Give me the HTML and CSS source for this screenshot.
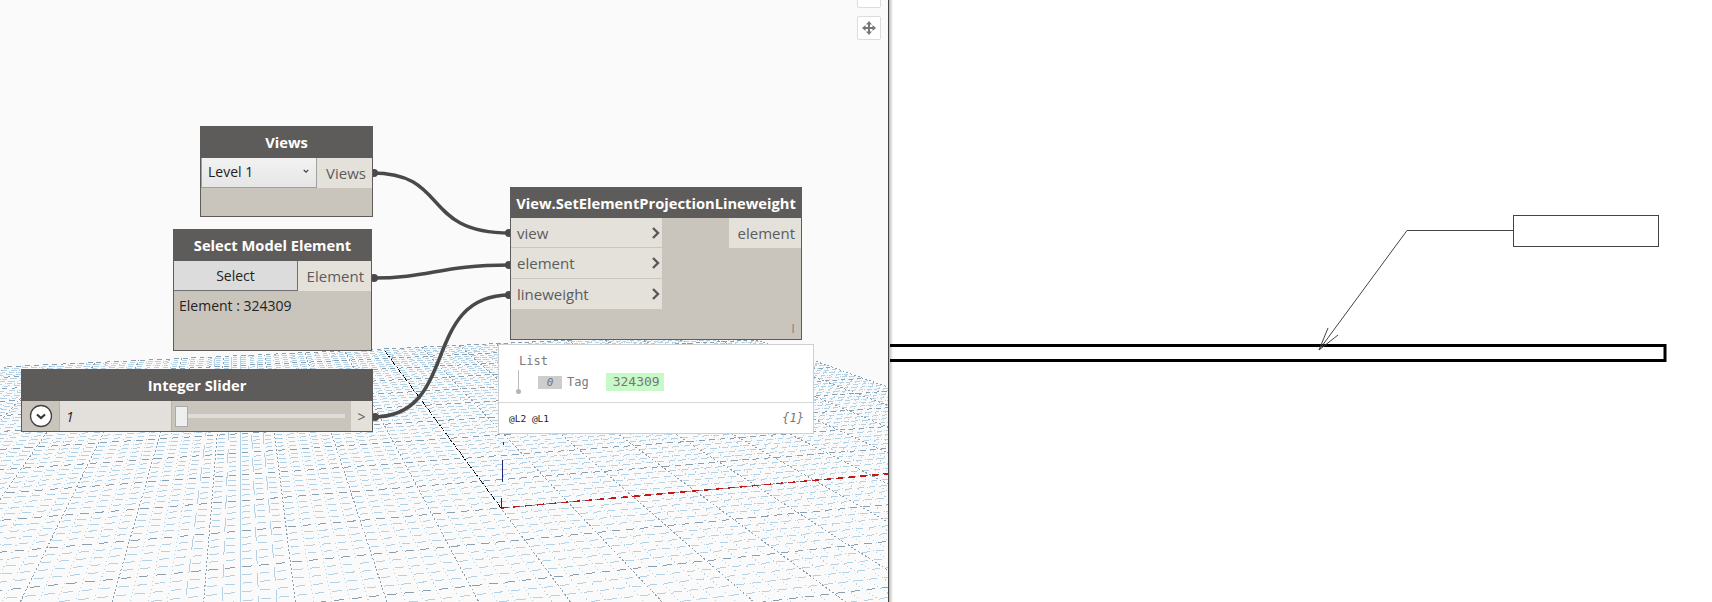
FILE: index.html
```html
<!DOCTYPE html>
<html lang="en">
<head>
    <meta charset="UTF-8">
    <title>Dynamo - Set Element Projection Lineweight</title>
    <link rel="stylesheet" href="styles.css">
</head>
<body>

    <div class="workspace">
        <svg id="grid" class="layer" width="889" height="602"></svg>

        <svg class="layer" width="889" height="602">
            <path class="wire" d="M372 173 C 450 173, 420 233, 510 233"/>
            <path class="wire" d="M372 278 C 430 278, 440 265, 510 265"/>
            <path class="wire" d="M373 417 C 460 417, 420 295, 510 295"/>
            <circle class="nub" cx="374" cy="173" r="4"/>
            <circle class="nub" cx="374" cy="278" r="4"/>
            <circle class="nub" cx="375" cy="417" r="4"/>
            <circle class="nub" cx="509" cy="233" r="4"/>
            <circle class="nub" cx="509" cy="265" r="4"/>
            <circle class="nub" cx="509" cy="295" r="4"/>
        </svg>

        <div class="node node-views">
            <div class="node-title">Views</div>
            <div class="node-row">
                <div class="combo">
                    <span>Level 1</span>
                    <svg width="6" height="5" viewBox="0 0 8 6"><path class="combo-arrow" d="M1 1 L4 4 L7 1"/></svg>
                </div>
                <div class="port port-out">Views</div>
            </div>
        </div>

        <div class="node node-select">
            <div class="node-title">Select Model Element</div>
            <div class="node-row">
                <div class="select-btn">Select</div>
                <div class="port port-out">Element</div>
            </div>
            <div class="node-info">Element : 324309</div>
        </div>

        <div class="node node-slider">
            <div class="node-title">Integer Slider</div>
            <div class="node-row slider-row">
                <div class="expander">
                    <svg width="24" height="24" viewBox="0 0 24 24">
                        <circle cx="12" cy="12" r="10.5" class="expander-ring"/>
                        <path class="expander-arrow" d="M8 10.5 L12 14 L16 10.5"/>
                    </svg>
                </div>
                <div class="slider-value">1</div>
                <div class="slider-track">
                    <div class="slider-thumb"></div>
                    <div class="slider-line"></div>
                </div>
                <div class="slider-out">&gt;</div>
            </div>
        </div>

        <div class="node node-main">
            <div class="node-title">View.SetElementProjectionLineweight</div>
            <div class="main-body">
                <div class="main-inputs">
                    <div class="port port-in">view<svg width="10" height="12" viewBox="0 0 10 12"><path class="port-arrow" d="M2 1 L7 6 L2 11"/></svg></div>
                    <div class="port port-in">element<svg width="10" height="12" viewBox="0 0 10 12"><path class="port-arrow" d="M2 1 L7 6 L2 11"/></svg></div>
                    <div class="port port-in">lineweight<svg width="10" height="12" viewBox="0 0 10 12"><path class="port-arrow" d="M2 1 L7 6 L2 11"/></svg></div>
                </div>
                <div class="port port-out main-output">element</div>
            </div>
            <div class="lacing">I</div>
        </div>

        <div class="watch">
            <div class="watch-body">
                <div class="watch-list">List</div>
                <div class="watch-item">
                    <span class="watch-index">0</span>
                    <span class="watch-tag">Tag</span>
                    <span class="watch-value">324309</span>
                </div>
                <div class="watch-stem"></div>
                <div class="watch-dot"></div>
            </div>
            <div class="watch-foot">
                <span class="watch-levels">@L2 @L1</span>
                <span class="watch-count">{1}</span>
            </div>
        </div>

        <div class="nav-btn nav-btn-top"></div>
        <div class="nav-btn nav-btn-pan">
            <svg width="16" height="16" viewBox="0 0 16 16">
                <path class="pan-icon" d="M8 1 L11 4.5 H9 V7 H11.5 V5 L15 8 L11.5 11 V9 H9 V11.5 H11 L8 15 L5 11.5 H7 V9 H4.5 V11 L1 8 L4.5 5 V7 H7 V4.5 H5 Z"/>
            </svg>
        </div>
    </div>

    <div class="sheet">
        <svg width="823" height="602">
            <rect class="wall" x="-6" y="345.5" width="781" height="15"/>
            <rect class="tag-box" x="623.5" y="215.5" width="145" height="31"/>
            <path class="leader" d="M623 230.5 H517 L429 350"/>
            <path class="leader" d="M438 328 L429 350 L448 335"/>
        </svg>
    </div>

    <script src="grid.js"></script>
</body>
</html>
```

FILE: styles.css
```css
* {
    box-sizing: border-box;
}
html, body {
    height: 100%;
}
body {
    margin: 0;
    display: flex;
    overflow: hidden;
    background: white;
    font-family: "Open Sans", "Liberation Sans", sans-serif;
}
.workspace {
    position: relative;
    flex: 0 0 889px;
    height: 602px;
    background: #fafafa;
    border-right: 1px solid #444;
    overflow: hidden;
}
.sheet {
    flex: 1;
    height: 602px;
    background: linear-gradient(to right, #b8b8b8, white 4px);
}
.sheet svg {
    display: block;
    margin-left: 1px;
}
.layer {
    position: absolute;
    left: 0;
    top: 0;
}

/* grid lines */
.minor-a, .near-a, .solid-a, .minor-b, .major-a, .major-b, .axis-y, .axis-x, .axis-z {
    fill: none;
    stroke-width: 1;
    shape-rendering: crispEdges;
}
.minor-a {
    stroke: #b4d2e6;
    stroke-dasharray: 1 3;
}
.near-a {
    stroke: #b4d2e6;
    stroke-dasharray: 14 9;
}
.solid-a {
    stroke: #b4d2e6;
}
.minor-b {
    stroke: #b4d2e6;
}
.major-a {
    stroke: #8aa0b0;
    stroke-dasharray: 2 2;
}
.major-b {
    stroke: #8aa0b0;
}
.axis-y {
    stroke: black;
    stroke-dasharray: 1 1;
}
.axis-x {
    stroke: #c81414;
    stroke-width: 1.5;
    stroke-dasharray: 7 5;
}
.axis-z {
    stroke: #1a2a80;
}

/* wires */
.wire {
    fill: none;
    stroke: #4a4947;
    stroke-width: 3.5;
}
.nub {
    fill: #4a4947;
}

/* nodes */
.node {
    position: absolute;
    display: flex;
    flex-direction: column;
    background: #c9c5bd;
    border: 1px solid #5e5c5a;
    border-top: 0;
}
.node-views {
    left: 200px;
    top: 126px;
    width: 173px;
    height: 91px;
}
.node-select {
    left: 173px;
    top: 229px;
    width: 199px;
    height: 122px;
}
.node-slider {
    left: 21px;
    top: 369px;
    width: 352px;
    height: 63px;
}
.node-main {
    left: 510px;
    top: 187px;
    width: 292px;
    height: 153px;
}
.node-title {
    flex: 0 0 32px;
    margin: 0 -1px;
    display: flex;
    align-items: center;
    justify-content: center;
    background: #5e5c5a;
    color: white;
    font-size: 14.7px;
    font-weight: 700;
    white-space: nowrap;
}
.node-main .node-title {
    flex-basis: 31px;
}
.node-row {
    display: flex;
    height: 30px;
}
.port {
    display: flex;
    align-items: center;
    background: #e4e1db;
    color: #5c5c5c;
    font-size: 15px;
}
.port-out {
    justify-content: flex-end;
    padding-right: 6px;
}
.combo {
    flex: 1;
    display: flex;
    align-items: center;
    justify-content: space-between;
    padding: 0 7px 2px 6px;
    background: linear-gradient(to bottom, #f2f2f2, #e6e6e6);
    border: 1px solid #a0a0a0;
    border-top: 0;
    color: #222;
    font-size: 14px;
}
.combo-arrow {
    fill: none;
    stroke: #444;
    stroke-width: 1.5;
}
.node-views .port-out {
    width: 55px;
}
.select-btn {
    flex: 1;
    display: flex;
    align-items: center;
    justify-content: center;
    background: #dcdcdc;
    border: 1px solid #707070;
    border-width: 0 1px 1px 0;
    color: #222;
    font-size: 14px;
}
.node-select .port-out {
    width: 73px;
    padding-right: 7px;
}
.node-info {
    padding: 5px 5px;
    color: #222;
    font-size: 14px;
}

/* slider node */
.slider-row {
    height: 30px;
}
.expander {
    flex: 0 0 37px;
    display: flex;
    align-items: center;
    justify-content: center;
}
.expander-ring {
    fill: white;
    stroke: #444;
    stroke-width: 1.3;
}
.expander-arrow {
    fill: none;
    stroke: #333;
    stroke-width: 2.2;
}
.slider-value {
    flex: 0 0 113px;
    display: flex;
    align-items: center;
    padding-left: 6px;
    background: #e3e0db;
    border: 1px solid #aeb4b8;
    border-width: 0 1px;
    color: #222;
    font-size: 14px;
    font-style: italic;
}
.slider-track {
    flex: 1;
    display: flex;
    align-items: center;
    padding-left: 3px;
    padding-right: 6px;
}
.slider-thumb {
    flex: 0 0 13px;
    height: 21px;
    background: #efefef;
    border: 1px solid #aaa;
}
.slider-line {
    flex: 1;
    height: 4px;
    background: #e0ddd8;
}
.slider-out {
    flex: 0 0 21px;
    display: flex;
    align-items: center;
    justify-content: center;
    background: #e4e1db;
    color: #5c5c5c;
    font-size: 14px;
}

/* main node */
.main-body {
    display: flex;
    justify-content: space-between;
    align-items: flex-start;
}
.main-inputs {
    width: 151px;
}
.port-in {
    height: 30.4px;
    justify-content: space-between;
    padding: 0 1px 0 6px;
    border-bottom: 1px solid #c9c5bd;
}
.port-in:last-child {
    border-bottom: 0;
}
.port-arrow {
    fill: none;
    stroke: #5a5855;
    stroke-width: 2.4;
}
.main-output {
    width: 72px;
    height: 30px;
}
.lacing {
    position: absolute;
    right: 6px;
    bottom: 2px;
    color: #8a8780;
    font-size: 13px;
}

/* watch preview */
.watch {
    position: absolute;
    left: 498px;
    top: 344px;
    width: 316px;
    height: 90px;
    background: white;
    border: 1px solid #cfcfcf;
    font-family: "DejaVu Sans Mono", "Liberation Mono", monospace;
}
.watch-body {
    position: relative;
    height: 58px;
    padding: 9px 0 0 20px;
    border-bottom: 1px solid #d8d8d8;
    color: #7a7a7a;
    font-size: 12px;
}
.watch-list {
    line-height: 15px;
}
.watch-item {
    display: flex;
    align-items: center;
    margin: 4px 0 0 19px;
}
.watch-index {
    width: 24px;
    height: 13px;
    margin-right: 5px;
    background: #cdcdcd;
    color: #777;
    font-size: 11px;
    font-style: italic;
    line-height: 13px;
    text-align: center;
}
.watch-tag {
    margin-right: 17px;
}
.watch-value {
    width: 58px;
    height: 18px;
    padding-left: 3px;
    background: #c8f9c8;
    color: #777;
    font-size: 13px;
    line-height: 18px;
    text-align: center;
}
.watch-stem {
    position: absolute;
    left: 19px;
    top: 25px;
    width: 1px;
    height: 21px;
    background: #bbb;
}
.watch-dot {
    position: absolute;
    left: 17px;
    top: 44px;
    width: 5px;
    height: 5px;
    border-radius: 50%;
    background: #b4b4b4;
}
.watch-foot {
    display: flex;
    align-items: center;
    justify-content: space-between;
    height: 30px;
    padding: 0 9px 0 10px;
}
.watch-levels {
    color: #222;
    font-size: 9.5px;
}
.watch-count {
    color: #777;
    font-size: 12px;
    font-style: italic;
}

/* navigation buttons */
.nav-btn {
    position: absolute;
    left: 857px;
    width: 24px;
    height: 24px;
    display: flex;
    align-items: center;
    justify-content: center;
    background: white;
    border: 1px solid #dcdcdc;
    border-radius: 2px;
}
.nav-btn-top {
    top: -16px;
}
.nav-btn-pan {
    top: 16px;
}
.pan-icon {
    fill: #777;
}

/* sheet drawing */
.wall {
    fill: none;
    stroke: black;
    stroke-width: 3;
}
.tag-box {
    fill: white;
    stroke: #444;
    stroke-width: 1;
}
.leader {
    fill: none;
    stroke: #444;
    stroke-width: 1;
}
```

FILE: grid.js
```js
// perspective floor grid, lines come from two vanishing points
var svg = document.getElementById("grid");
var ox = 501, oy = 508;      // world origin on screen
var v1x = 240, v1y = 155;    // lines going "back"
var v2x = 4500, v2y = 155;   // lines going "right"
var a = 0.0034, b = 0.0164;
var uMin = -45, uMax = 50, vMin = -32, vMax = 50;
var paths = {};

function project(u, v) {
    var w = 1 + a * u + b * v;
    return [
        (ox + a * u * v2x + b * v * v1x) / w,
        (oy + a * u * v2y + b * v * v1y) / w
    ];
}

function addLine(cls, p, q) {
    paths[cls] = (paths[cls] || "") + "M" + p[0].toFixed(1) + " " + p[1].toFixed(1) +
        "L" + q[0].toFixed(1) + " " + q[1].toFixed(1);
}

// lines towards the back
for (var u = uMin; u <= uMax; u++) {
    var cls = "minor-a";
    if (u === -18) cls = "solid-a";
    else if (u > -22 && u < -14) cls = "near-a";
    if (u % 5 === 0) cls = "major-a";
    addLine(cls, project(u, vMin), project(u, vMax));
}

// lines to the right, one dash in each cell
for (var v = vMin; v <= vMax; v++) {
    var rowCls = v % 5 === 0 ? "major-b" : "minor-b";
    for (var c = uMin; c < uMax; c++) {
        addLine(rowCls, project(c + 0.12, v), project(c + 0.68, v));
    }
}

// axes
addLine("axis-y", project(0, 0), project(0, vMax));
addLine("axis-x", project(0, 0), project(uMax + 60, 0));
addLine("axis-z", [501.5, 508], [501.5, 498]);
addLine("axis-z", [502.5, 482], [502.5, 460]);
addLine("axis-z", [503.5, 445], [503.5, 442]);

// drawn in this order so majors and axes stay on top
["minor-a", "near-a", "solid-a", "minor-b", "major-a", "major-b", "axis-y", "axis-x", "axis-z"].forEach(function (cls) {
    var el = document.createElementNS("http://www.w3.org/2000/svg", "path");
    el.setAttribute("d", paths[cls]);
    el.setAttribute("class", cls);
    svg.appendChild(el);
});
```
